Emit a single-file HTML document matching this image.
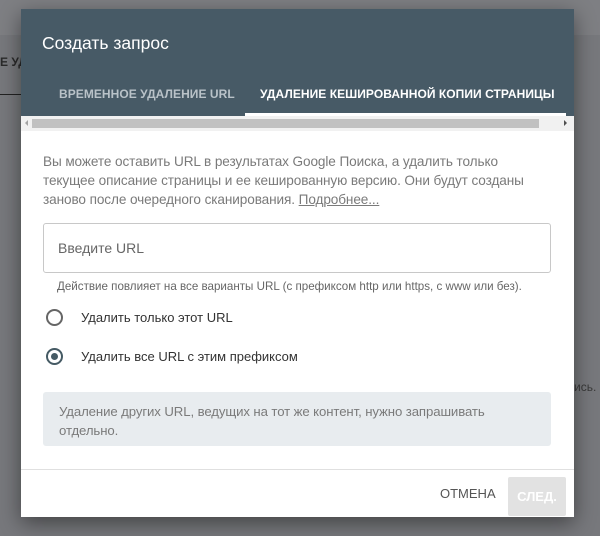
<!DOCTYPE html>
<html><head><meta charset="utf-8"><style>
*{margin:0;padding:0;box-sizing:border-box}
body{width:600px;height:536px;background:#77787c;font-family:"Liberation Sans",sans-serif;position:relative;overflow:hidden}
.bgtop{position:absolute;left:0;top:0;width:600px;height:35px;background:#7e7f83}
.bgtxt{position:absolute;left:0;top:55px;color:#2a2a2a;font-size:12px;font-weight:bold}
.bgline{position:absolute;left:0;top:94px;width:21px;height:1px;background:#222}
.bgr{position:absolute;left:574px;top:380px;color:#3a3a3a;font-size:12px}
.dlg{position:absolute;left:21px;top:9px;width:553px;height:508px;background:#fff;box-shadow:0 6px 20px rgba(0,0,0,.45)}
.hdr{height:107px;background:#475a66;position:relative}
.title{position:absolute;left:21px;top:24px;color:#fff;font-size:17.5px}
.tab{position:absolute;top:78px;font-size:12px;font-weight:bold;letter-spacing:0.05px}
.t1{left:38px;color:#b9c2c8}
.t2{left:239px;color:#fff}
.ul{position:absolute;left:224px;top:104px;width:321px;height:3px;background:#fff}
.sb{position:absolute;left:0;top:107px;width:553px;height:15px;background:#f1f1f1}
.thumb{position:absolute;left:11px;top:3px;width:507px;height:9px;background:#c1c1c1}
.al{position:absolute;left:4px;top:4px;width:0;height:0;border-top:3px solid transparent;border-bottom:3px solid transparent;border-right:3px solid #a3a3a3}
.ar{position:absolute;left:543px;top:4px;width:0;height:0;border-top:3px solid transparent;border-bottom:3px solid transparent;border-left:3px solid #505050}
.p{position:absolute;left:22px;top:143px;width:482px;color:#7a7a7a;font-size:13.6px;line-height:19px;letter-spacing:-0.1px}
.p u{color:#7a7a7a}
.inp{position:absolute;left:22px;top:214px;width:508px;height:50px;border:1px solid #c8c8c8;border-radius:3px}
.inp span{position:absolute;left:14px;top:16px;font-size:14px;color:#666}
.help{position:absolute;left:36px;top:271px;font-size:11.6px;color:#666;letter-spacing:0}
.rad{position:absolute;left:25px;width:17px;height:17px;border:2px solid #666;border-radius:50%}
.rad.on{border-color:#455a64}
.rad.on:after{content:"";position:absolute;left:3px;top:3px;width:7px;height:7px;border-radius:50%;background:#455a64}
.rl{position:absolute;left:60px;font-size:13px;color:#333}
.note{position:absolute;left:22px;top:383px;width:508px;height:54px;background:#e8ecef;border-radius:3px;padding:10px 16px;font-size:13.2px;line-height:19px;color:#7a7a7a;letter-spacing:-0.1px}
.div{position:absolute;left:0;top:460px;width:553px;height:1px;background:#e0e0e0}
.cancel{position:absolute;left:419px;top:477px;font-size:13px;color:#555}
.next{position:absolute;left:487px;top:468px;width:58px;height:39px;background:#e2e2e2;border-radius:2px;color:#fff;font-size:13px;font-weight:bold;text-align:center;line-height:39px}
</style></head><body>
<div class="bgtop"></div>
<div class="bgtxt">Е УД</div>
<div class="bgline"></div>
<div class="bgr">ись.</div>
<div class="dlg">
 <div class="hdr">
  <div class="title">Создать запрос</div>
  <div class="tab t1">ВРЕМЕННОЕ УДАЛЕНИЕ URL</div>
  <div class="tab t2">УДАЛЕНИЕ КЕШИРОВАННОЙ КОПИИ СТРАНИЦЫ</div>
  <div class="ul"></div>
 </div>
 <div class="sb"><div class="al"></div><div class="thumb"></div><div class="ar"></div></div>
 <div class="p">Вы можете оставить URL в результатах Google Поиска, а удалить только текущее описание страницы и ее кешированную версию. Они будут созданы заново после очередного сканирования. <u>Подробнее...</u></div>
 <div class="inp"><span>Введите URL</span></div>
 <div class="help">Действие повлияет на все варианты URL (с префиксом http или https, с www или без).</div>
 <div class="rad" style="top:300px"></div><div class="rl" style="top:301px">Удалить только этот URL</div>
 <div class="rad on" style="top:339px"></div><div class="rl" style="top:340px">Удалить все URL с этим префиксом</div>
 <div class="note">Удаление других URL, ведущих на тот же контент, нужно запрашивать отдельно.</div>
 <div class="div"></div>
 <div class="cancel">ОТМЕНА</div>
 <div class="next">СЛЕД.</div>
</div>
</body></html>
